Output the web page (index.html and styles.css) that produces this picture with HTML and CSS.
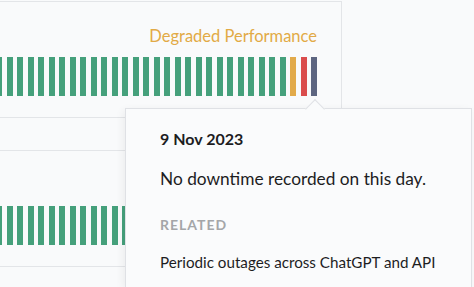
FILE: index.html
```html
<!DOCTYPE html>
<html lang="en">
<head>
  <meta charset="UTF-8" />
  <title>System Status</title>
  <link rel="stylesheet" href="styles.css">
</head>
<body>
  <div class="card">
    <div class="component">
      <div class="component-head"><span class="status degraded">Degraded Performance</span></div>
      <div class="bars" id="bars-api"></div>
    </div>
    <div class="component">
      <div class="component-head"></div>
      <div class="bars" id="bars-chat"></div>
    </div>
  </div>

  <div class="tooltip">
    <h4 class="tooltip-date">9 Nov 2023</h4>
    <p class="tooltip-msg">No downtime recorded on this day.</p>
    <h5 class="tooltip-label">Related</h5>
    <p class="tooltip-link">Periodic outages across ChatGPT and API</p>
  </div>

  <script>
    function drawBars(id, days) {
      const box = document.getElementById(id);
      days.forEach(function (d) {
        const bar = document.createElement('div');
        bar.className = 'bar ' + d;
        box.appendChild(bar);
      });
    }

    const apiDays = Array(28).fill('up').concat(['minor', 'major', 'nodata']);
    const chatDays = Array(31).fill('up');

    drawBars('bars-api', apiDays);
    drawBars('bars-chat', chatDays);
  </script>
</body>
</html>
```

FILE: styles.css
```css
body { margin: 0; height: 287px; overflow: hidden; position: relative; background: #f9fafb; font-family: Lato, "Open Sans", sans-serif; color: #1d1d1f; }

.card { width: 342px; box-sizing: border-box; margin-top: 1px; border-right: 1px solid #e3e5e8; display: flex; flex-direction: column; gap: 32px; }
.component { border-top: 1px solid #e3e5e8; border-bottom: 1px solid #e3e5e8; padding: 22px 24px 21px 0; }
.component-head { display: flex; justify-content: flex-end; height: 24px; line-height: 24px; font-size: 16.5px; margin-bottom: 9px; }
.status { color: #3f9b76; }
.status.degraded { color: #e2aa46; }

.bars { display: flex; justify-content: flex-end; gap: 4.49px; margin-left: -3.7px; height: 39px; }
.bar { flex: none; width: 6px; background: #45a07b; }
.bar.minor { background: #e2aa4a; }
.bar.major { background: #da4c4c; }
.bar.nodata { background: #5d6580; }

.tooltip { position: absolute; left: 125px; top: 108px; width: 347px; height: 179px; box-sizing: border-box; padding: 20px 20px 0 34px; background: #fafbfc; border: 1px solid #dfe1e5; border-bottom: none; box-shadow: -2px 2px 8px rgba(0,0,0,0.06); white-space: nowrap; }
.tooltip::before { content: ""; position: absolute; left: 181.5px; top: -7px; width: 13px; height: 13px; background: #fafbfc; border-top: 1px solid #dfe1e5; border-left: 1px solid #dfe1e5; transform: rotate(45deg); }
.tooltip-date { margin: 0; font-size: 16px; line-height: 20px; font-weight: 700; }
.tooltip-msg { margin: 18px 0 0; font-size: 17.3px; line-height: 24px; }
.tooltip-label { margin: 24px 0 0; font-size: 14px; line-height: 20px; font-weight: 700; color: #a4a6a8; text-transform: uppercase; letter-spacing: 1px; }
.tooltip-link { margin: 15.5px 0 0; font-size: 15.2px; line-height: 22px; }
```
